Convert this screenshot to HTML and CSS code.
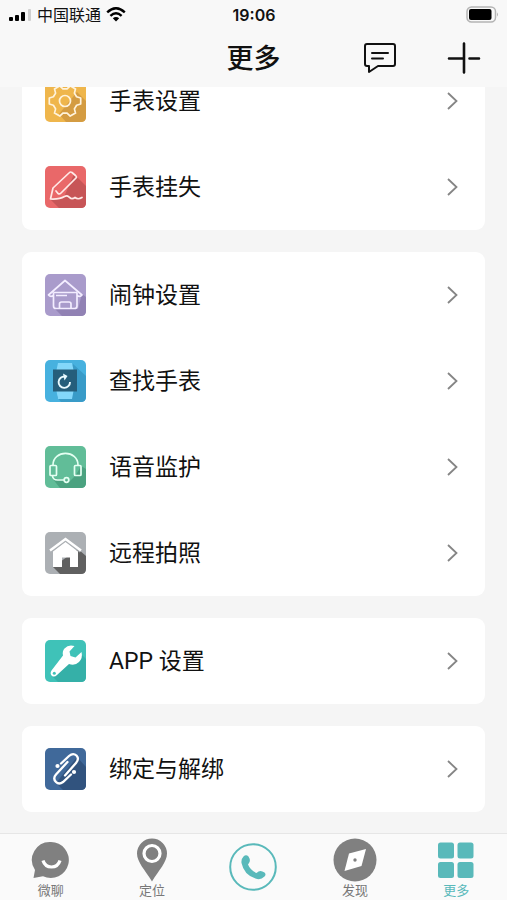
FILE: index.html
```html
<!DOCTYPE html>
<html lang="zh-CN">
<head>
<meta charset="utf-8">
<meta name="viewport" content="width=device-width, initial-scale=1">
<title>更多</title>
<link rel="stylesheet" href="styles.css">
</head>
<body>
<div class="status">
  <div class="carrier">
    <svg width="23" height="14" viewBox="0 0 23 14" aria-hidden="true">
      <rect x="0" y="9" width="4" height="4" rx="1"/><rect x="6" y="7" width="4" height="6" rx="1"/><rect x="12" y="4" width="4" height="9" rx="1"/><rect x="19" y="1" width="3" height="12" rx="1" fill="#cfcfcf"/>
    </svg>
    <span>中国联通</span>
    <svg width="20" height="15" viewBox="0 0 20 15" aria-hidden="true">
      <path d="M1.200 5.300Q10-2.800 18.800 5.300M4.400 8.900Q10 3.700 15.600 8.900" fill="none" stroke="#000" stroke-width="2.400"/>
      <path d="M6.800 11.300Q10 8.500 13.200 11.300L10 14.500z"/>
    </svg>
  </div>
  <time>19:06</time>
  <svg class="battery" width="33" height="17" viewBox="0 0 33 17" aria-hidden="true">
    <rect x="1" y="1" width="28.500" height="15" rx="4.500" fill="none" stroke="#b4b4b4" stroke-width="1.500"/>
    <rect x="3" y="3" width="22.500" height="11" rx="2"/><path d="M31 6.500q2 2 0 4z" fill="#b4b4b4"/>
  </svg>
</div>
<header class="nav">
  <h1>更多</h1>
  <div class="actions">
    <button type="button" aria-label="消息">
      <svg width="34" height="32" viewBox="0 0 34 32" fill="none" stroke="#111" stroke-width="2" stroke-linecap="round" stroke-linejoin="round">
        <path d="M4 2h26q2 0 2 2v18q0 2-2 2H15l-9 6v-6H4q-2 0-2-2V4q0-2 2-2zM9 11h16M9 16.500h11"/>
      </svg>
    </button>
    <button type="button" aria-label="添加">
      <svg width="34" height="32" viewBox="0 0 34 32" fill="none" stroke="#111" stroke-width="2.600" stroke-linecap="round">
        <path d="M17 1.500v29M2 16.500h15M22.500 16.500h9.500"/>
      </svg>
    </button>
  </div>
</header>
<main class="list">
  <section class="card">
    <a class="row" href="#watch">
      <svg class="icon" viewBox="0 0 41 42"><rect width="41" height="42" rx="5" fill="#efb64c"/><path d="M32 12l9 9v16q0 5-5 5H21l-7-8z" fill="#d49c42"/>
        <g fill="none" stroke="#fff3dc" stroke-width="1.700" stroke-linejoin="round"><circle cx="20" cy="21" r="5.500"/><path d="M35.700 24L31.600 25.200 29.400 28.900 30.500 33.100 25.200 36.100 22.100 33.100H17.900L14.800 36.100 9.500 33.100 10.600 28.900 8.400 25.200 4.300 24V18L8.400 16.800 10.600 13.100 9.500 8.900 14.800 5.900 17.900 8.900H22.100L25.200 5.900 30.500 8.900 29.400 13.100 31.600 16.800 35.700 18z"/></g></svg>
      <span>手表设置</span><svg class="chevron" viewBox="0 0 11 18"><path d="M1 1l8.500 8L1 17"/></svg>
    </a>
    <a class="row" href="#lost">
      <svg class="icon" viewBox="0 0 41 42"><rect width="41" height="42" rx="5" fill="#e96869"/><path d="M29 8l12 12v17q0 5-5 5H14L5 33l14-2z" fill="#c75557"/>
        <g fill="none" stroke="#ffe9e7" stroke-width="1.700" stroke-linecap="round" stroke-linejoin="round"><path d="M11 25l2 2.500q1.500 1 3-.5L31 12q1-1-.5-2.500L27 6.500q-1.500-1-2.500 0L8 22 5.500 33q9 .500 14-2.500 2.500-1.500 4.500.500l2 1.500q2 .500 4-1 3 2.500 7 0"/></g></svg>
      <span>手表挂失</span><svg class="chevron" viewBox="0 0 11 18"><path d="M1 1l8.500 8L1 17"/></svg>
    </a>
  </section>
  <section class="card">
    <a class="row" href="#alarm">
      <svg class="icon" viewBox="0 0 41 42"><rect width="41" height="42" rx="5" fill="#a99bcb"/><path d="M37 20l4 3v14q0 5-5 5H17l-8-8 24 1z" fill="#9182b4"/>
        <g fill="none" stroke="#f3edff" stroke-width="1.700" stroke-linejoin="round"><path d="M8.500 18.500V32q0 2.500 2.500 2.500h18.500q2.500 0 2.500-2.500V18.500M8.500 18.500H32M8.500 21.500q-3 2-5-.500L20 6.500 37 21q-2 2.500-5 .5M14.500 34.500V30q0-2 2-2h7.500q2 0 2 2v4.500M11 21.500h11"/></g></svg>
      <span>闹钟设置</span><svg class="chevron" viewBox="0 0 11 18"><path d="M1 1l8.500 8L1 17"/></svg>
    </a>
    <a class="row" href="#find">
      <svg class="icon" viewBox="0 0 41 42"><rect width="41" height="42" rx="5" fill="#47b1df"/><path d="M28 4l13 12v21q0 5-5 5H16l-4-5z" fill="#399bc8"/>
        <path d="M13 3h14l1.500 7h-17zM11.500 31h17L27 39H13z" fill="#83d7fa"/><rect x="8" y="9.500" width="24" height="22" fill="#255e7b"/><path d="M20 16.500A5.700 5.700 0 1 0 25 22" fill="none" stroke="#e9faff" stroke-width="1.900"/><path d="M18 13.500l4.500 2.500-3 4.500z" fill="#e9faff"/></svg>
      <span>查找手表</span><svg class="chevron" viewBox="0 0 11 18"><path d="M1 1l8.500 8L1 17"/></svg>
    </a>
    <a class="row" href="#voice">
      <svg class="icon" viewBox="0 0 41 42"><rect width="41" height="42" rx="5" fill="#61bd98"/><path d="M36 20l5 3v14q0 5-5 5H15L7 32l18 3 6-6z" fill="#4ba280"/>
        <g fill="none" stroke="#e5fff2" stroke-width="1.700" stroke-linejoin="round"><path d="M8 19C8 3.500 33 3.500 33 19M7.500 30q.5 4 5 4H19"/><rect x="5" y="19.500" width="6.500" height="10" rx="1"/><rect x="29.500" y="19.500" width="6.500" height="10" rx="1"/><circle cx="21.500" cy="34" r="2.300"/></g></svg>
      <span>语音监护</span><svg class="chevron" viewBox="0 0 11 18"><path d="M1 1l8.500 8L1 17"/></svg>
    </a>
    <a class="row" href="#photo">
      <svg class="icon" viewBox="0 0 41 42"><rect width="41" height="42" rx="5" fill="#acb0b4"/><path d="M33 17l8 7v13q0 5-5 5H15l-7-7z" fill="#606060"/>
        <path d="M8 19.500L20.500 10 33 19.500V35h-8V25.500h-8V35H8z" fill="#fff"/><path d="M5 19L20.500 7 36 19" fill="none" stroke="#acb0b4" stroke-width="4"/><path d="M5 18.500L20.500 7 36 18.500" fill="none" stroke="#fff" stroke-width="2.400"/></svg>
      <span>远程拍照</span><svg class="chevron" viewBox="0 0 11 18"><path d="M1 1l8.500 8L1 17"/></svg>
    </a>
  </section>
  <section class="card">
    <a class="row" href="#app">
      <svg class="icon" viewBox="0 0 41 42"><rect width="41" height="42" rx="5" fill="#3fc2b8"/><path d="M36 14l5 5v18q0 5-5 5H13l-6-6z" fill="#35b0a8"/>
        <path d="M29.500 6q-6-2-10 2.500-2.500 3-1.500 7L6.500 30.500q-2 3 .5 5.500 2.500 1.500 5-1L24 24q6 2 10-2 4-4 2.500-10l-6 5.500-5-1.500-1-4.500z" fill="#fff"/><circle cx="9.300" cy="33.300" r="1.500" fill="#3fc2b8"/></svg>
      <span>APP 设置</span><svg class="chevron" viewBox="0 0 11 18"><path d="M1 1l8.500 8L1 17"/></svg>
    </a>
  </section>
  <section class="card">
    <a class="row" href="#bind">
      <svg class="icon" viewBox="0 0 41 42"><rect width="41" height="42" rx="5" fill="#40699a"/><path d="M32 9l9 10v18q0 5-5 5H18l-7-7z" fill="#31537e"/>
        <g fill="none" stroke="#fff" stroke-width="2.300" stroke-linecap="round"><path d="M16 15.500L24 8q4-3.500 7.500-.5 3 3.500-.5 7.500L20 27.500M26 26.500L18 34q-4 3-7 0-3.500-3.500 0-7.500L22.500 14"/></g><circle cx="12.500" cy="18" r="2.100" fill="#fff"/><circle cx="29" cy="24" r="2.100" fill="#fff"/></svg>
      <span>绑定与解绑</span><svg class="chevron" viewBox="0 0 11 18"><path d="M1 1l8.500 8L1 17"/></svg>
    </a>
  </section>
</main>
<nav class="tabs">
  <a href="#chat"><svg width="44" height="44" viewBox="0 0 44 44"><path d="M22 4a18 18 0 1 1-8 34.200L4.500 40 6 32A18 18 0 0 1 22 4z" fill="#808080"/><path d="M14 22.500q2 6.500 8.500 6.500t8.500-6.500" fill="none" stroke="#fff" stroke-width="3.200"/></svg><span>微聊</span></a>
  <a href="#locate"><svg width="44" height="44" viewBox="0 0 44 44"><path d="M22 0.500a15 15 0 0 1 15 15C37 24 29 32 22 43.500 15 32 7 24 7 15.500a15 15 0 0 1 15-15z" fill="#808080"/><circle cx="22" cy="15.500" r="8" fill="none" stroke="#fff" stroke-width="3.200"/></svg><span>定位</span></a>
  <a href="#call" class="call" aria-label="通话"><svg width="48" height="48" viewBox="0 0 48 48"><circle cx="24" cy="24" r="22.800" fill="none" stroke="#59b9ba" stroke-width="2"/><path d="M14.500 13.500q2.500-2.500 5 0 2.500 4 .5 6.500l-1 1.500q2.500 6 8.500 8.500l2-1.500q2.500-1.500 6 1 2 2 0 4-4 4-9 2Q15 32 12.500 20q-.5-4 2-6.500z" fill="#59b9ba"/></svg></a>
  <a href="#discover"><svg width="44" height="44" viewBox="0 0 44 44"><circle cx="22" cy="22" r="21.500" fill="#808080"/><path d="M33 11l-4.500 17L11.500 33 16 15.500z" fill="#fff"/><circle cx="22" cy="22" r="1.700" fill="#808080"/></svg><span>发现</span></a>
  <a href="#more" class="active" aria-current="page"><svg width="44" height="44" viewBox="0 0 44 44" fill="#59b9ba"><rect x="4" y="4.500" width="16" height="16" rx="2.500"/><rect x="23.500" y="4.500" width="16" height="16" rx="2.500"/><rect x="4" y="24" width="16" height="16" rx="2.500"/><rect x="23.500" y="24" width="16" height="16" rx="2.500"/></svg><span>更多</span></a>
</nav>
</body>
</html>
```

FILE: styles.css
```css
* { box-sizing: border-box; }
body {
  margin: 0;
  height: 100vh;
  display: flex;
  flex-direction: column;
  background: #f5f5f5;
  color: #111;
  font-family: Inter, "Noto Sans CJK SC", sans-serif;
}
svg { display: block; flex: none; }
a { color: inherit; text-decoration: none; }
.status {
  flex: none;
  height: 29px;
  padding: 0 8px 0 9px;
  display: grid;
  grid-template-columns: 1fr auto 1fr;
  align-items: center;
  background: #f8f8f8;
  font-size: 16px;
  line-height: 28px;
}
.status time { font-weight: 600; }
.carrier { display: flex; align-items: center; gap: 5px; }
.battery { justify-self: end; }
.nav {
  flex: none;
  height: 58px;
  padding: 0 26px;
  display: grid;
  grid-template-columns: 1fr auto 1fr;
  align-items: center;
  background: #f8f8f8;
}
.nav h1 {
  grid-column: 2;
  margin: 0;
  padding-top: 2px;
  font-size: 27px;
  line-height: 40px;
  font-weight: 500;
}
.actions { display: flex; justify-content: flex-end; gap: 50px; }
.actions button { padding: 0; border: 0; background: none; }
.list {
  flex: 1;
  min-height: 0;
  overflow: hidden;
  padding: 0 22px 21px;
  display: flex;
  flex-direction: column;
  justify-content: flex-end;
  gap: 22px;
}
.card { flex: none; border-radius: 9px; background: #fff; }
.row {
  height: 86px;
  padding: 0 27px 0 23px;
  display: flex;
  align-items: center;
  font-family: Roboto, "Noto Sans CJK SC", sans-serif;
  font-size: 23px;
  line-height: 24px;
}
.row span { flex: 1; margin-left: 23px; padding-top: 2px; }
.icon { width: 41px; height: 42px; }
.chevron {
  width: 11px;
  height: 18px;
  fill: none;
  stroke: #858585;
  stroke-width: 1.8px;
}
.tabs {
  flex: none;
  height: 67px;
  border-top: 1px solid #e6e6e6;
  background: #fafafa;
  display: grid;
  grid-template-columns: repeat(5, 1fr);
  color: #777;
  font-size: 13px;
  line-height: 16px;
}
.tabs a {
  padding-top: 4px;
  display: flex;
  flex-direction: column;
  align-items: center;
}
.tabs .call { padding: 0; justify-content: center; }
.tabs .active { color: #59b9ba; }
```
